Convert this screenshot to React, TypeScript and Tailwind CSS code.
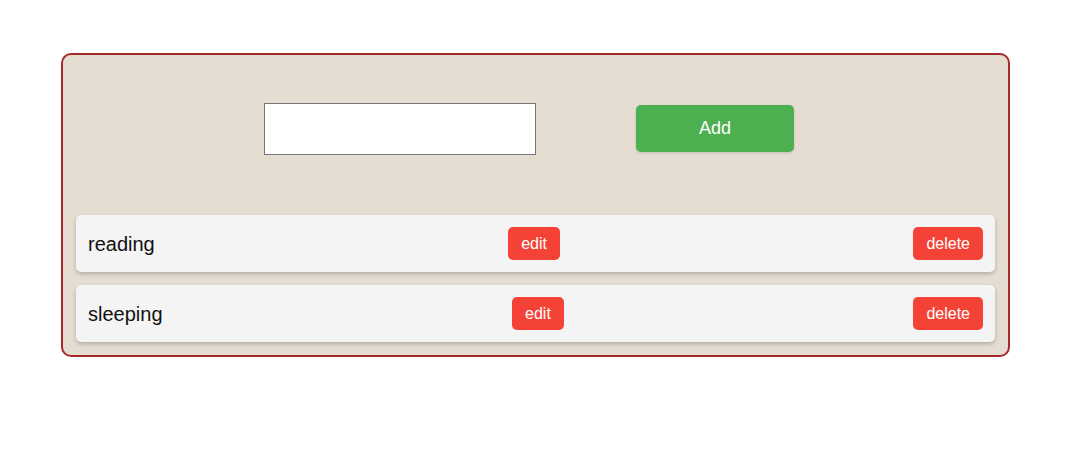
import React, { useState } from 'react';

interface Todo {
    id: number;
    text: string;
}

const startTodos: Todo[] = [
    { id: 1, text: 'reading' },
    { id: 2, text: 'sleeping' },
];

export default function App() {
    const [todos] = useState<Todo[]>(startTodos);
    const [value, setValue] = useState('');

    return (
        <div className="min-h-[464px] bg-white pt-[53px] font-['Liberation_Sans',Arial,sans-serif]">
            <div className="ml-[61px] w-[949px] rounded-[10px] border-2 border-[#a52a2a] bg-[#e5ddd1] pb-[13px]">
                {/* form row */}
                <div className="flex items-start gap-[100px] pl-[201px] pt-[48px]">
                    <input
                        type="text"
                        value={value}
                        onChange={e => setValue(e.target.value)}
                        className="h-[52px] w-[272px] border border-[#767676] bg-white px-2 text-lg outline-none"
                    />
                    <button className="mt-[2px] h-[47px] w-[158px] rounded-[5px] bg-[#4caf50] text-[18px] text-white shadow-[0_1px_3px_rgba(0,0,0,0.15)]">
                        Add
                    </button>
                </div>

                {/* list */}
                <div className="ml-[13px] mr-[13px] mt-[60px] flex flex-col gap-[13px]">
                    {todos.map(todo => (
                        <div
                            key={todo.id}
                            className="flex items-center justify-between rounded-[5px] bg-[#f4f4f4] px-3 py-3 shadow-[0_2px_4px_rgba(0,0,0,0.22)]"
                        >
                            <span className="text-[20px] text-[#111]">{todo.text}</span>
                            <button className="rounded-[5px] bg-[#f44336] px-[13px] py-[7px] text-[16px] leading-[19px] text-white">
                                edit
                            </button>
                            <button className="rounded-[5px] bg-[#f44336] px-[13px] py-[7px] text-[16px] leading-[19px] text-white">
                                delete
                            </button>
                        </div>
                    ))}
                </div>
            </div>
        </div>
    );
}
